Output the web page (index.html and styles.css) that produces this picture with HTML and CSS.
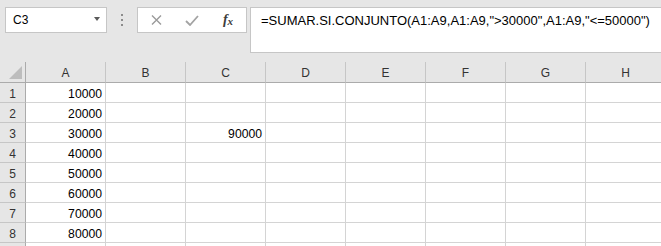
FILE: index.html
```html
<!DOCTYPE html>
<html lang="es">
<head>
<meta charset="utf-8">
<title>Hoja</title>
<link rel="stylesheet" href="styles.css">
</head>
<body>
<div class="app">
  <div class="fbar">
    <div class="namebox">
      <span class="ref">C3</span>
      <span class="caret"></span>
    </div>
    <div class="grip"><i></i><i></i><i></i></div>
    <div class="fxbox">
      <span class="slot">
        <svg width="11" height="10" viewBox="0 0 11 10"><path d="M1 0.5 L10 9.5 M10 0.5 L1 9.5" stroke="#9a9a9a" stroke-width="1.4" fill="none"/></svg>
      </span>
      <span class="slot">
        <svg width="14" height="11" viewBox="0 0 14 11"><path d="M1 6 L5 10 L13 1" stroke="#a3a3a3" stroke-width="1.8" fill="none"/></svg>
      </span>
      <span class="slot fx">f<span class="x">x</span></span>
    </div>
    <div class="formula">=SUMAR.SI.CONJUNTO(A1:A9,A1:A9,"&gt;30000",A1:A9,"&lt;=50000")</div>
  </div>
  <div class="sheet">
    <div class="corner"><svg width="13" height="13" viewBox="0 0 13 13"><path d="M13 0 L13 13 L0 13 Z" fill="#bdbdbd"/></svg></div>
    <div class="ch">A</div><div class="ch">B</div><div class="ch">C</div><div class="ch">D</div><div class="ch">E</div><div class="ch">F</div><div class="ch">G</div><div class="ch">H</div>

    <div class="rh">1</div><div class="c">10000</div><div class="c"></div><div class="c"></div><div class="c"></div><div class="c"></div><div class="c"></div><div class="c"></div><div class="c"></div>
    <div class="rh">2</div><div class="c">20000</div><div class="c"></div><div class="c"></div><div class="c"></div><div class="c"></div><div class="c"></div><div class="c"></div><div class="c"></div>
    <div class="rh">3</div><div class="c">30000</div><div class="c"></div><div class="c">90000</div><div class="c"></div><div class="c"></div><div class="c"></div><div class="c"></div><div class="c"></div>
    <div class="rh">4</div><div class="c">40000</div><div class="c"></div><div class="c"></div><div class="c"></div><div class="c"></div><div class="c"></div><div class="c"></div><div class="c"></div>
    <div class="rh">5</div><div class="c">50000</div><div class="c"></div><div class="c"></div><div class="c"></div><div class="c"></div><div class="c"></div><div class="c"></div><div class="c"></div>
    <div class="rh">6</div><div class="c">60000</div><div class="c"></div><div class="c"></div><div class="c"></div><div class="c"></div><div class="c"></div><div class="c"></div><div class="c"></div>
    <div class="rh">7</div><div class="c">70000</div><div class="c"></div><div class="c"></div><div class="c"></div><div class="c"></div><div class="c"></div><div class="c"></div><div class="c"></div>
    <div class="rh">8</div><div class="c">80000</div><div class="c"></div><div class="c"></div><div class="c"></div><div class="c"></div><div class="c"></div><div class="c"></div><div class="c"></div>
    <div class="rh"></div><div class="c"></div><div class="c"></div><div class="c"></div><div class="c"></div><div class="c"></div><div class="c"></div><div class="c"></div><div class="c"></div>
  </div>
</div>
</body>
</html>
```
FILE: styles.css
```css
html, body {
  margin: 0;
  padding: 0;
}
body {
  background: #e6e6e6;
  width: 661px;
  height: 246px;
  overflow: hidden;
  font-family: "Liberation Sans", Arial, sans-serif;
  color: #000;
}
.app {
  width: 661px;
  height: 246px;
  overflow: hidden;
}
.fbar {
  display: flex;
  align-items: flex-start;
  box-sizing: border-box;
  height: 62px;
  padding: 7px 0 0 5px;
}
.namebox {
  box-sizing: border-box;
  width: 102px;
  height: 26px;
  background: #fff;
  border: 1px solid #c6c6c6;
  display: flex;
  align-items: flex-start;
  padding: 5px 0 0 7px;
}
.ref {
  font-size: 12px;
  line-height: 14px;
  flex: 1;
}
.caret {
  width: 0;
  height: 0;
  border-left: 3.5px solid transparent;
  border-right: 3.5px solid transparent;
  border-top: 4px solid #5a5a5a;
  margin: 4px 6px 0 0;
}
.grip {
  width: 30px;
  height: 26px;
  display: flex;
  flex-direction: column;
  align-items: center;
  justify-content: center;
  gap: 3px;
}
.grip i {
  display: block;
  width: 2px;
  height: 2px;
  background: #8c8c8c;
}
.fxbox {
  box-sizing: border-box;
  width: 110px;
  height: 26px;
  background: #fff;
  border: 1px solid #c6c6c6;
  display: flex;
  align-items: center;
}
.slot {
  width: 36px;
  display: flex;
  justify-content: center;
  align-items: center;
}
.slot svg {
  display: block;
}
.fx {
  font-family: "Liberation Serif", "Times New Roman", serif;
  font-style: italic;
  font-weight: bold;
  font-size: 14px;
  color: #3c3c3c;
  line-height: 14px;
}
.fx .x {
  font-size: 11px;
  font-weight: bold;
  position: relative;
  top: 1px;
}
.formula {
  box-sizing: border-box;
  flex: 1;
  margin-left: 3px;
  margin-right: -20px;
  height: 46px;
  background: #fff;
  border: 1px solid #c6c6c6;
  padding: 5px 0 0 10px;
  font-size: 13px;
  line-height: 16px;
  white-space: nowrap;
}
.sheet {
  display: grid;
  grid-template-columns: 26px repeat(8, 80px);
  grid-template-rows: 21px repeat(9, 20px);
  background: #fff;
}
.corner, .ch, .rh, .c {
  box-sizing: border-box;
}
.corner {
  background: #e6e6e6;
  border-right: 1px solid #ababab;
  border-bottom: 1px solid #ababab;
  display: flex;
  justify-content: flex-end;
  align-items: flex-end;
  padding: 0 3px 3px 0;
}
.corner svg {
  display: block;
}
.ch {
  background: #e6e6e6;
  border-right: 1px solid #c6c6c6;
  border-bottom: 1px solid #ababab;
  font-size: 12px;
  line-height: 14px;
  color: #333;
  display: flex;
  justify-content: center;
  align-items: center;
  padding-top: 1px;
}
.rh {
  background: #e6e6e6;
  border-right: 1px solid #ababab;
  border-bottom: 1px solid #c6c6c6;
  font-size: 12px;
  line-height: 14px;
  color: #333;
  display: flex;
  justify-content: center;
  align-items: flex-end;
  padding-bottom: 1px;
}
.c {
  border-right: 1px solid #d4d4d4;
  border-bottom: 1px solid #d4d4d4;
  font-size: 12.2px;
  line-height: 14px;
  display: flex;
  justify-content: flex-end;
  align-items: flex-end;
  padding: 0 3px 1px 0;
}
```
